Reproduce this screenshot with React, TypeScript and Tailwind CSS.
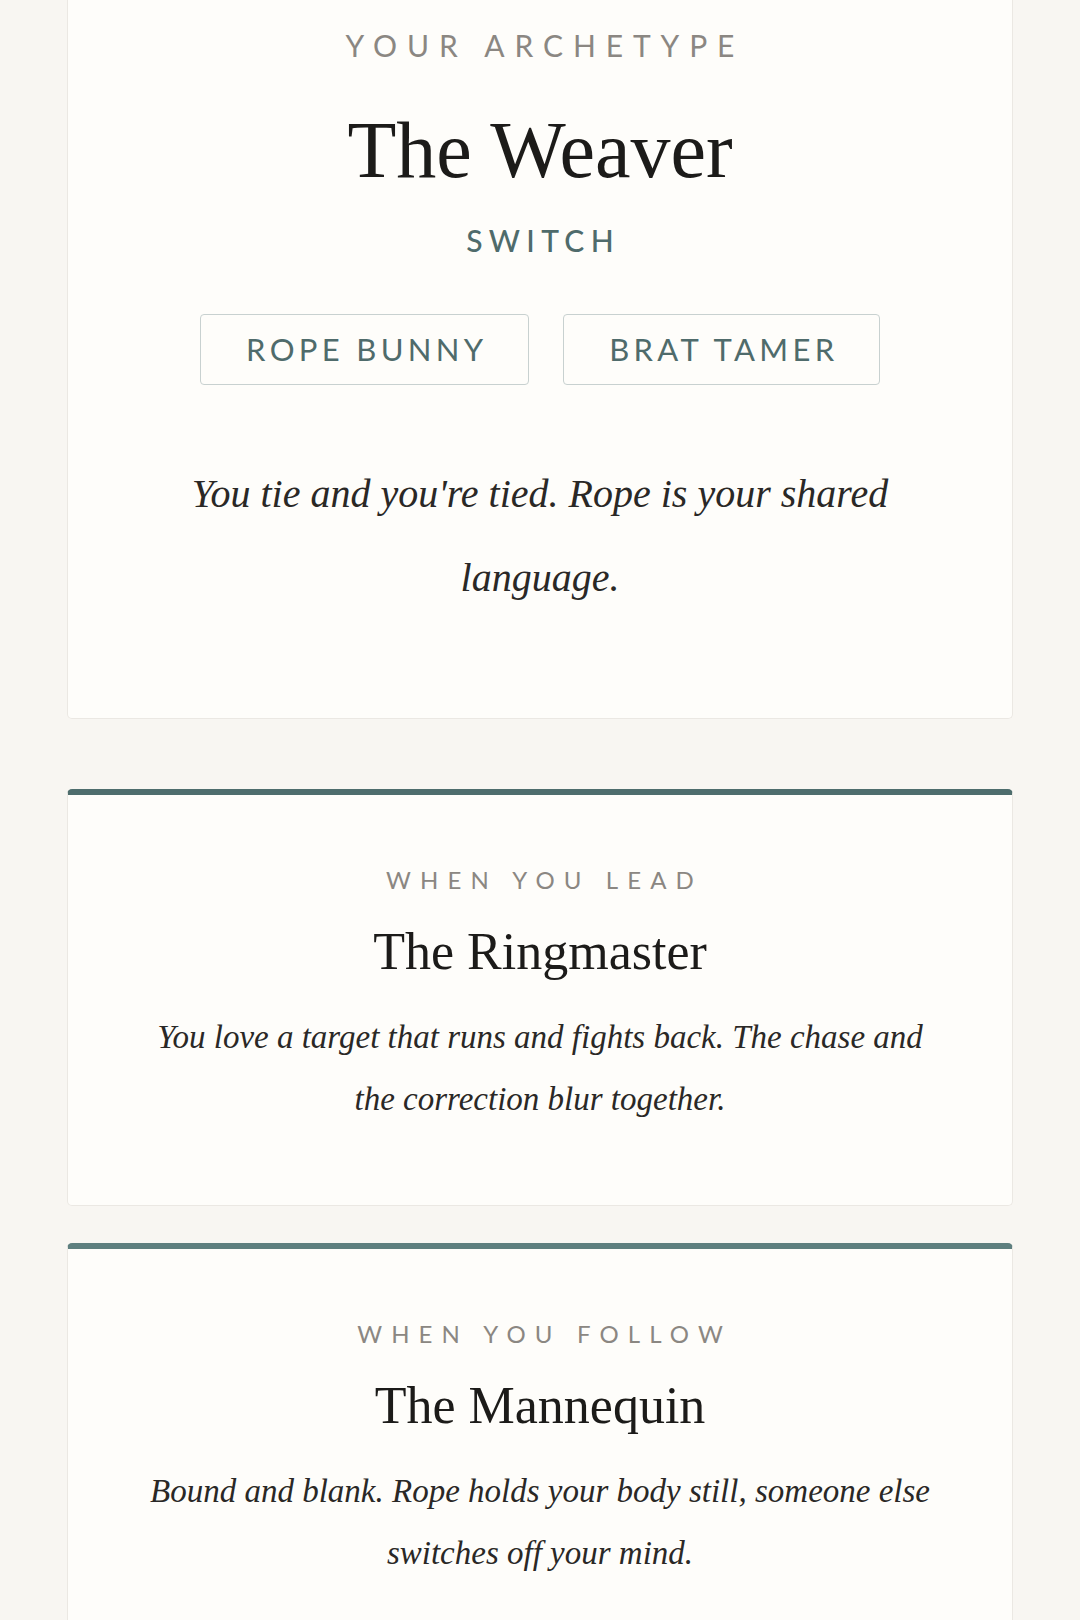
import React from "react";

const sans = "font-['Lato','Liberation_Sans',sans-serif]";
const serif = "font-['Liberation_Serif','Times_New_Roman',serif]";

function RoleCard({
  label,
  title,
  text,
  bar,
  mt,
}: {
  label: string;
  title: string;
  text: string;
  bar: string;
  mt: string;
}) {
  return (
    <div
      className={`${mt} mx-[67px] rounded-[5px] border border-[#ebe8e3] border-t-[6px] ${bar} bg-[#fefdfa] pt-[69px] pb-[75px] text-center`}
    >
      <div className={`${sans} text-[24px] leading-[32px] tracking-[0.38em] pl-[0.38em] text-[#8b8782]`}>{label}</div>
      <div className={`${serif} mt-[30px] text-[52px] leading-[52px] text-[#1c1b19]`}>{title}</div>
      <p className={`${serif} mx-auto mt-[28px] max-w-[798px] text-[33px] italic leading-[62px] text-[#2a2826]`}>{text}</p>
    </div>
  );
}

export default function App() {
  return (
    <div className="min-h-[1620px] w-full overflow-hidden bg-[#f8f6f2]">
      <div className="mx-[67px] rounded-b-[5px] border-x border-b border-[#ebe8e3] bg-[#fefdfa] pt-[25px] pb-[98px] text-center">
        <div className={`${sans} text-[30px] leading-[40px] tracking-[0.33em] pl-[0.33em] text-[#8b8782]`}>YOUR ARCHETYPE</div>
        <h1 className={`${serif} mt-[45px] text-[80px] leading-[80px] font-normal text-[#1c1b19]`}>The Weaver</h1>
        <div className={`${sans} mt-[30px] text-[30px] leading-[40px] font-medium tracking-[0.21em] pl-[0.21em] text-[#4f6b6b]`}>SWITCH</div>
        <div className="mt-[54px] flex justify-center gap-[34px]">
          <div className={`${sans} flex h-[71px] w-[329px] items-center justify-center rounded-[4px] border-[1.5px] border-[#c8d1d0] pl-[0.15em] text-[31px] leading-[31px] tracking-[0.14em] text-[#4f6b6b]`}>ROPE BUNNY</div>
          <div className={`${sans} flex h-[71px] w-[317px] items-center justify-center rounded-[4px] border-[1.5px] border-[#c8d1d0] pl-[0.15em] text-[31px] leading-[31px] tracking-[0.14em] text-[#4f6b6b]`}>BRAT TAMER</div>
        </div>
        <p className={`${serif} mx-auto mt-[67px] max-w-[798px] text-[40px] italic leading-[84px] text-[#2a2826]`}>
          You tie and you're tied. Rope is your shared language.
        </p>
      </div>

      <RoleCard
        mt="mt-[70px]"
        bar="border-t-[#4e6d6d]"
        label="WHEN YOU LEAD"
        title="The Ringmaster"
        text="You love a target that runs and fights back. The chase and the correction blur together."
      />
      <RoleCard
        mt="mt-[37px]"
        bar="border-t-[#5e7f7f]"
        label="WHEN YOU FOLLOW"
        title="The Mannequin"
        text="Bound and blank. Rope holds your body still, someone else switches off your mind."
      />
    </div>
  );
}
